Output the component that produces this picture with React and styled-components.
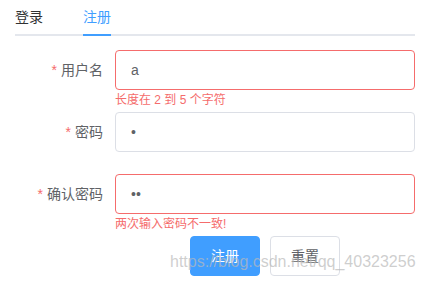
import React, { useState } from "react"
import styled, { createGlobalStyle } from "styled-components"

const FONT = `"Liberation Sans", "Noto Sans CJK SC", sans-serif`

const Global = createGlobalStyle`
  body {
    margin: 0;
    background: #fff;
    font-family: ${FONT};
  }
`

const fields = [
  { label: "用户名", value: "a", type: "text", error: "长度在 2 到 5 个字符" },
  { label: "密码", value: "1", type: "password" },
  { label: "确认密码", value: "12", type: "password", error: "两次输入密码不一致!" },
]

export default function App() {
  const [tab, setTab] = useState(1)

  return (
    <Page>
      <Global />
      <Tabs>
        {["登录", "注册"].map((name, i) => (
          <Tab key={name} active={i === tab} onClick={() => setTab(i)}>
            {name}
          </Tab>
        ))}
      </Tabs>

      <Form>
        {fields.map(f => (
          <Item key={f.label}>
            <Label>
              <Star>*</Star>
              {f.label}
            </Label>
            <Content>
              <Input
                type={f.type}
                defaultValue={f.value}
                invalid={!!f.error}
                readOnly
              />
              {f.error && <Error>{f.error}</Error>}
            </Content>
          </Item>
        ))}
        <Item>
          <Label />
          <Buttons>
            <Button primary>注册</Button>
            <Button>重置</Button>
          </Buttons>
        </Item>
      </Form>

      <Watermark>https://blog.csdn.net/qq_40323256</Watermark>
    </Page>
  )
}

const Page = styled.div`
  position: relative;
  width: 400px;
  height: 284px;
  margin-left: 15px;
  overflow: visible;
`

const Tabs = styled.div`
  display: flex;
  height: 34px;
  border-bottom: 2px solid #e4e7ed;
`

const Tab = styled.div`
  position: relative;
  padding: 0 20px;
  height: 34px;
  line-height: 34px;
  font-size: 14px;
  color: ${p => (p.active ? "#409eff" : "#303133")};
  cursor: pointer;

  &:first-child {
    padding-left: 0;
  }

  &::after {
    content: "";
    position: absolute;
    left: ${p => (p.active ? "20px" : "0")};
    right: 20px;
    bottom: -2px;
    height: 2px;
    background: #409eff;
    display: ${p => (p.active ? "block" : "none")};
  }
`

const Form = styled.div`
  margin-top: 14px;
`

const Item = styled.div`
  display: flex;
  margin-bottom: 22px;
`

const Label = styled.label`
  flex: 0 0 100px;
  box-sizing: border-box;
  padding-right: 12px;
  text-align: right;
  line-height: 40px;
  font-size: 14px;
  color: #606266;
`

const Star = styled.span`
  color: #f56c6c;
  margin-right: 4px;
`

const Content = styled.div`
  position: relative;
  flex: 1;
`

const Input = styled.input`
  display: block;
  box-sizing: border-box;
  width: 100%;
  height: 40px;
  padding: 0 15px;
  border: 1px solid ${p => (p.invalid ? "#f56c6c" : "#dcdfe6")};
  border-radius: 4px;
  outline: none;
  font-family: ${FONT};
  font-size: 14px;
  color: #606266;
  background: #fff;
`

const Error = styled.div`
  position: absolute;
  top: 100%;
  left: 0;
  padding-top: 4px;
  font-size: 12px;
  line-height: 1;
  color: #f56c6c;
`

const Buttons = styled.div`
  flex: 1;
  display: flex;
  justify-content: center;
  gap: 10px;
`

const Button = styled.button`
  box-sizing: border-box;
  height: 40px;
  padding: 12px 20px;
  font-family: ${FONT};
  font-size: 14px;
  line-height: 14px;
  border-radius: 4px;
  border: 1px solid ${p => (p.primary ? "#409eff" : "#dcdfe6")};
  background: ${p => (p.primary ? "#409eff" : "#fff")};
  color: ${p => (p.primary ? "#fff" : "#606266")};
  cursor: pointer;
`

const Watermark = styled.div`
  position: absolute;
  left: 155px;
  top: 252px;
  font-family: "Liberation Sans", Arial, sans-serif;
  font-size: 16px;
  line-height: 20px;
  color: rgba(185, 185, 185, 0.7);
  white-space: nowrap;
  pointer-events: none;
`
